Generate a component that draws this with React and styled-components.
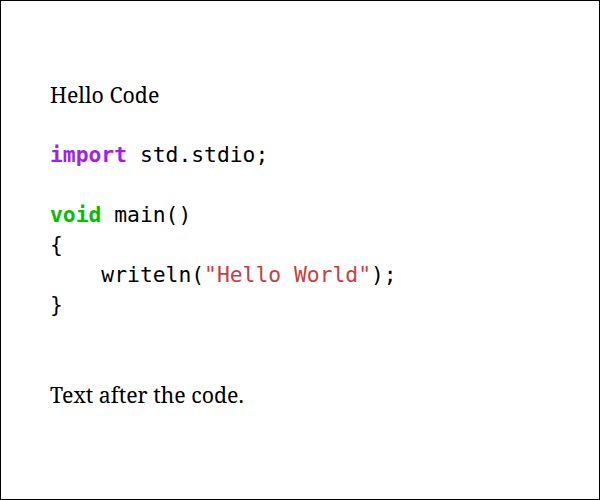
import React from 'react';
import styled, { createGlobalStyle } from 'styled-components';

const GlobalStyle = createGlobalStyle`
  html, body {
    margin: 0;
    padding: 0;
    background: #fff;
  }
`;

const Page = styled.div`
  box-sizing: border-box;
  width: 600px;
  height: 500px;
  border: 1px solid #000;
  padding: 79px 49px 0;
  font-family: 'Noto Serif', 'DejaVu Serif', serif;
  font-size: 21.33px;
  line-height: 30px;
  color: #000;
`;

const Para = styled.p`
  margin: 0 0 30px;
`;

const CodeBlock = styled.pre`
  margin: 0 0 60px;
  font-family: 'DejaVu Sans Mono', monospace;
  font-size: 21.33px;
  line-height: 30px;
  white-space: pre;
`;

const Token = styled.span`
  color: ${(p) => p.$color || 'inherit'};
  font-weight: ${(p) => (p.$bold ? 'bold' : 'normal')};
`;

export default function App() {
  return (
    <>
      <GlobalStyle />
      <Page>
        <Para>Hello Code</Para>
        <CodeBlock>
          <Token $color="#a020f0" $bold>import</Token> std.stdio;{'\n'}
          {'\n'}
          <Token $color="#00c000" $bold>void</Token> main(){'\n'}
          {'{\n'}
          {'    writeln('}<Token $color="#c83e3e">"Hello World"</Token>);{'\n'}
          {'}'}
        </CodeBlock>
        <Para>Text after the code.</Para>
      </Page>
    </>
  );
}
